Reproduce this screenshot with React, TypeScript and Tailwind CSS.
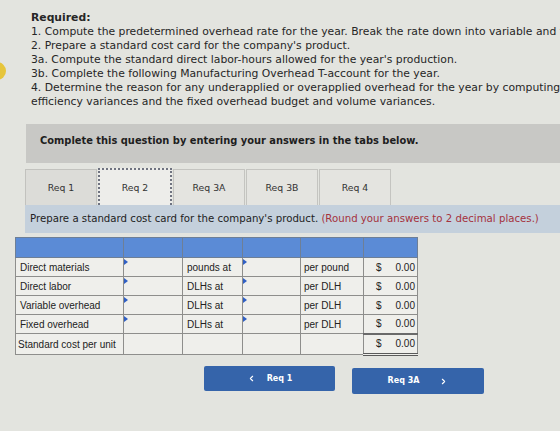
import { ChevronLeft, ChevronRight } from "lucide-react";

const requirements = [
  "1. Compute the predetermined overhead rate for the year. Break the rate down into variable and fixed elements.",
  "2. Prepare a standard cost card for the company's product.",
  "3a. Compute the standard direct labor-hours allowed for the year's production.",
  "3b. Complete the following Manufacturing Overhead T-account for the year.",
  "4. Determine the reason for any underapplied or overapplied overhead for the year by computing the variable overhead rate and",
  "efficiency variances and the fixed overhead budget and volume variances.",
];

const tabs = ["Req 1", "Req 2", "Req 3A", "Req 3B", "Req 4"];

const rows = [
  { label: "Direct materials", unit: "pounds at", rate: "per pound" },
  { label: "Direct labor", unit: "DLHs at", rate: "per DLH" },
  { label: "Variable overhead", unit: "DLHs at", rate: "per DLH" },
  { label: "Fixed overhead", unit: "DLHs at", rate: "per DLH" },
];

const verdana = "font-['DejaVu_Sans',Verdana,sans-serif]";
const arial = "font-['Liberation_Sans',Arial,sans-serif]";

// small blue flag marking an editable cell
function InputFlag() {
  return (
    <span className="absolute left-0 top-[1px] h-0 w-0 border-y-[3px] border-l-[4px] border-y-transparent border-l-[#2f5fc4]" />
  );
}

function InputCell({ w }: { w: string }) {
  return (
    <td className={`relative ${w} border border-[#8e8e8c] bg-[#efefeb]`}>
      <InputFlag />
    </td>
  );
}

function AmountCell({ total }: { total?: boolean }) {
  return (
    <td
      className={`w-[54px] border border-[#8e8e8c] bg-[#efefeb] ${
        total ? "border-t-2 border-t-[#6a6a6a] border-b-[3px] border-b-[#5a5a5a] border-double" : ""
      }`}
    >
      <div className="flex items-center justify-between pl-[12px] pr-[2px]">
        <span>$</span>
        <span>0.00</span>
      </div>
    </td>
  );
}

export default function App() {
  return (
    <div className="relative h-[431px] w-[560px] overflow-hidden bg-[#e3e4df] text-[#262626]">
      {/* yellow dot peeking in on the left edge */}
      <div className="absolute left-[-12px] top-[62px] h-[18px] w-[18px] rounded-full bg-[#e6c53c]" />

      <div className={`pl-[31px] pt-[11px] ${verdana} text-[10.8px] leading-[14px]`}>
        <p className="font-bold">Required:</p>
        {requirements.map((line) => (
          <p key={line} className="whitespace-nowrap">
            {line}
          </p>
        ))}
      </div>

      <div
        className={`ml-[26px] mt-[15px] flex h-[39px] items-center bg-[#c8c8c5] pb-[5px] pl-[14px] ${verdana} text-[9.9px] font-bold text-[#1e1e1e]`}
      >
        Complete this question by entering your answers in the tabs below.
      </div>

      <div className={`ml-[25px] mt-[5px] flex items-end gap-[1px] ${verdana} text-[9.3px] text-[#333]`}>
        {tabs.map((tab, i) =>
          i === 1 ? (
            <div
              key={tab}
              className="flex h-[37px] w-[74px] items-center justify-center border-2 border-b-0 border-dotted border-[#6f7380] bg-[#ededea]"
            >
              {tab}
            </div>
          ) : (
            <div
              key={tab}
              className={`flex h-[36px] w-[72px] items-center justify-center border border-b-0 ${
                i === 0 ? "border-[#c2c2be] bg-[#dcdcd8]" : "border-[#c4c4c0] bg-[#e4e4e0]"
              }`}
            >
              {tab}
            </div>
          ),
        )}
      </div>

      <div
        className={`ml-[25px] flex h-[28px] items-center bg-[#c4d0dc] pl-[5px] ${verdana} text-[10.2px] text-[#222]`}
      >
        Prepare a standard cost card for the company's product.&nbsp;
        <span className="text-[#a5323c]">(Round your answers to 2 decimal places.)</span>
      </div>

      <table
        className={`ml-[15px] mt-[4px] border-collapse border border-[#7a7a78] ${arial} text-[10px] text-[#222]`}
      >
        <thead>
          <tr className="h-[20px] bg-[#5b8bd6]">
            <th className="w-[108px] border border-[#6e7f96]" />
            <th className="w-[59px] border border-[#6e7f96]" />
            <th className="w-[60px] border border-[#6e7f96]" />
            <th className="w-[58px] border border-[#6e7f96]" />
            <th className="w-[63px] border border-[#6e7f96]" />
            <th className="w-[54px] border border-[#6e7f96]" />
          </tr>
        </thead>
        <tbody>
          {rows.map((row) => (
            <tr key={row.label} className="h-[19px]">
              <td className="w-[108px] border border-[#8e8e8c] bg-[#efefeb] pl-[4px]">{row.label}</td>
              <InputCell w="w-[59px]" />
              <td className="w-[60px] border border-[#8e8e8c] bg-[#efefeb] pl-[4px]">{row.unit}</td>
              <InputCell w="w-[58px]" />
              <td className="w-[63px] border border-[#8e8e8c] bg-[#efefeb] pl-[3px]">{row.rate}</td>
              <AmountCell />
            </tr>
          ))}
          <tr className="h-[21px]">
            <td className="border border-[#8e8e8c] bg-[#efefeb] pl-[2px]">Standard cost per unit</td>
            <td className="border border-[#8e8e8c] bg-[#efefeb]" />
            <td className="border border-[#8e8e8c] bg-[#efefeb]" />
            <td className="border border-[#8e8e8c] bg-[#efefeb]" />
            <td className="border border-[#8e8e8c] bg-[#efefeb]" />
            <AmountCell total />
          </tr>
        </tbody>
      </table>

      <div className={`ml-[204px] mt-[10px] flex gap-[17px] ${verdana} text-[8px] font-bold text-white`}>
        <button className="flex h-[25px] w-[131px] items-center justify-center gap-[11px] rounded-[2px] bg-[#3564aa]">
          <ChevronLeft size={9} strokeWidth={3} />
          <span>Req 1</span>
        </button>
        <button className="mt-[2px] flex h-[26px] w-[132px] items-center justify-center gap-[20px] rounded-[2px] bg-[#3564aa]">
          <span>Req 3A</span>
          <ChevronRight size={9} strokeWidth={3} />
        </button>
      </div>
    </div>
  );
}
